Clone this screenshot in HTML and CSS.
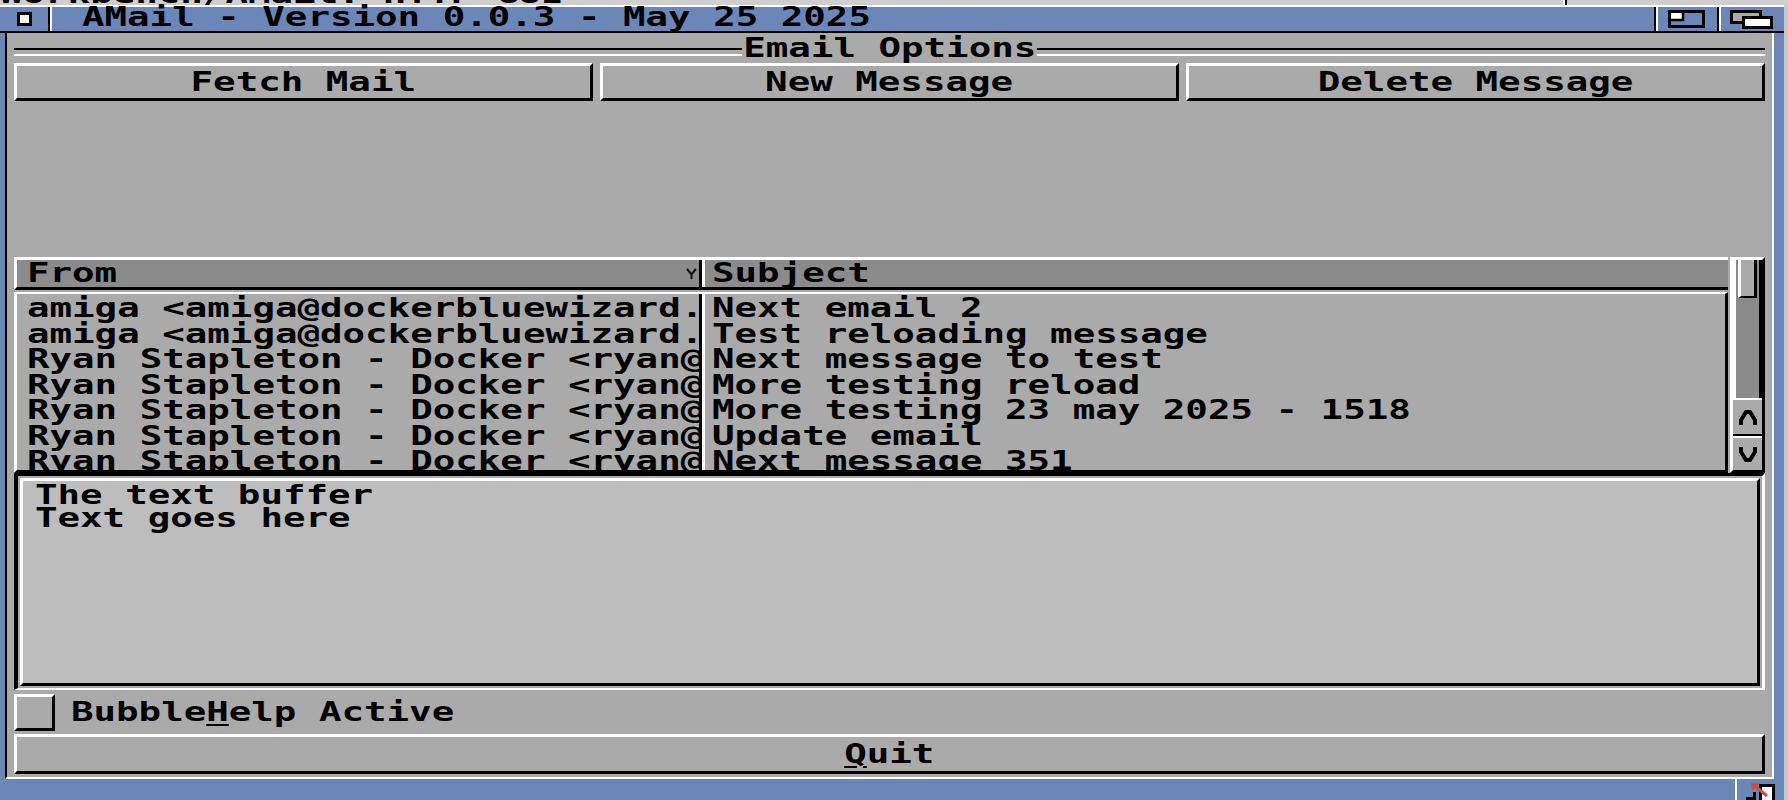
FILE: index.html
```html
<!DOCTYPE html>
<html lang="en">
<head>
    <meta charset="UTF-8">
    <title>AMail - Version 0.0.3</title>
    <link rel="stylesheet" href="styles.css">
</head>
<body>
    <div class="screen-bar">
        <div class="screen-bar-text"><span class="t">Workbench/AMail: HTTP GUI</span></div>
        <div class="screen-gadget"></div>
    </div>
    <div class="window">
        <div class="titlebar">
            <div class="close-gadget"><div class="close-box"></div></div>
            <div class="title"><span class="t">AMail - Version 0.0.3 - May 25 2025</span></div>
            <div class="title-gadget">
                <svg width="37" height="18" viewBox="0 0 37 18">
                    <rect x="1.5" y="1.5" width="34" height="15" fill="none" stroke="#000" stroke-width="3"/>
                    <rect x="3" y="3" width="12" height="7" fill="#fff"/>
                    <path d="M15 3 V10 H3" fill="none" stroke="#000" stroke-width="2.5"/>
                </svg>
            </div>
            <div class="title-gadget depth">
                <svg width="43" height="19" viewBox="0 0 43 19">
                    <rect x="1.5" y="1.5" width="29" height="11" fill="#aaa" stroke="#000" stroke-width="3"/>
                    <rect x="13.5" y="7.5" width="28" height="10" fill="#fff" stroke="#000" stroke-width="3"/>
                </svg>
            </div>
        </div>

        <div class="middle">
            <div class="content">
                <div class="group-title"><span class="t">Email Options</span></div>

                <div class="button-row">
                    <div class="button"><span class="t">Fetch Mail</span></div>
                    <div class="button"><span class="t">New Message</span></div>
                    <div class="button"><span class="t">Delete Message</span></div>
                </div>

                <div class="spacer"></div>

                <div class="list-area">
                    <div class="listview">
                        <div class="list-header">
                            <div class="col-from head-from">
                                <span class="t">From</span>
                                <svg class="sort-mark" width="11" height="12" viewBox="0 0 11 12">
                                    <path d="M1 1 L5.5 6.5 L10 1 M5.5 6.5 V11" fill="none" stroke="#111" stroke-width="2"/>
                                </svg>
                            </div>
                            <div class="col-subject"><span class="t">Subject</span></div>
                        </div>
                        <div class="list-body">
                            <div class="col-from">
                                <div class="line"><span class="t">amiga &lt;amiga@dockerbluewizard.com&gt;</span></div>
                                <div class="line"><span class="t">amiga &lt;amiga@dockerbluewizard.com&gt;</span></div>
                                <div class="line"><span class="t">Ryan Stapleton - Docker &lt;ryan@dockerbluewizard.com&gt;</span></div>
                                <div class="line"><span class="t">Ryan Stapleton - Docker &lt;ryan@dockerbluewizard.com&gt;</span></div>
                                <div class="line"><span class="t">Ryan Stapleton - Docker &lt;ryan@dockerbluewizard.com&gt;</span></div>
                                <div class="line"><span class="t">Ryan Stapleton - Docker &lt;ryan@dockerbluewizard.com&gt;</span></div>
                                <div class="line"><span class="t">Ryan Stapleton - Docker &lt;ryan@dockerbluewizard.com&gt;</span></div>
                            </div>
                            <div class="col-subject">
                                <div class="line"><span class="t">Next email 2</span></div>
                                <div class="line"><span class="t">Test reloading message</span></div>
                                <div class="line"><span class="t">Next message to test</span></div>
                                <div class="line"><span class="t">More testing reload</span></div>
                                <div class="line"><span class="t">More testing 23 may 2025 - 1518</span></div>
                                <div class="line"><span class="t">Update email</span></div>
                                <div class="line"><span class="t">Next message 351</span></div>
                            </div>
                        </div>
                    </div>
                    <div class="scrollbar">
                        <div class="track"><div class="knob"></div></div>
                        <div class="arrow arrow-up">
                            <svg width="20" height="17" viewBox="0 0 20 17">
                                <path d="M3 16 V11 L8 3 H12 L17 11 V16" fill="none" stroke="#000" stroke-width="4"/>
                            </svg>
                        </div>
                        <div class="arrow">
                            <svg width="20" height="17" viewBox="0 0 20 17">
                                <path d="M3 1 V6 L8 14 H12 L17 6 V1" fill="none" stroke="#000" stroke-width="4"/>
                            </svg>
                        </div>
                    </div>
                </div>

                <div class="editor">
                    <div class="editor-inner">
                        <div class="line"><span class="t">The text buffer</span></div>
                        <div class="line"><span class="t">Text goes here</span></div>
                    </div>
                </div>

                <div class="check-row">
                    <div class="checkbox"></div>
                    <span class="t">Bubble<u>H</u>elp Active</span>
                </div>

                <div class="button quit"><span class="t"><u>Q</u>uit</span></div>
            </div>
        </div>

        <div class="bottom-bar">
            <div class="size-gadget">
                <svg width="30" height="18" viewBox="0 0 30 18">
                    <rect x="14.5" y="3.5" width="13" height="16" fill="#fff" stroke="#000" stroke-width="3"/>
                    <path d="M0 16.5 H8.5 V10" fill="none" stroke="#000" stroke-width="3"/>
                    <path d="M21 14 L9 4" stroke="#d84a3a" stroke-width="3"/>
                    <path d="M5 1 H14 L6 9 Z" fill="#d84a3a"/>
                </svg>
            </div>
        </div>
    </div>
</body>
</html>
```

FILE: styles.css
```css
* {
    box-sizing: border-box;
}
body {
    margin: 0;
    width: 1788px;
    height: 800px;
    overflow: hidden;
    background-color: #c8c8c8;
    color: #000;
    font-family: "DejaVu Sans Mono", "Liberation Mono", monospace;
    font-weight: bold;
    font-size: 26px;
}
/* topaz-like wide glyphs: 15.65px advance stretched to 22.5px */
.t {
    display: inline-block;
    white-space: pre;
    transform: scaleX(1.44);
    transform-origin: 0 50%;
}
u {
    text-decoration-thickness: 2px;
    text-underline-offset: 3px;
}

.screen-bar {
    display: flex;
    height: 5px;
    overflow: hidden;
    background-color: #cfcfcf;
}
.screen-bar-text {
    width: 1563px;
    margin-top: -19px;
    line-height: 26px;
    white-space: nowrap;
    overflow: hidden;
}
.screen-gadget {
    width: 4px;
    border-left: 2px solid #fff;
    border-right: 2px solid #000;
}

.window {
    width: 1784px;
    height: 795px;
    display: flex;
    flex-direction: column;
    background-color: #6b87b8;
}

.titlebar {
    display: flex;
    height: 28px;
    border-top: 2px solid #fff;
    border-bottom: 2px solid #000;
}
.close-gadget {
    width: 50px;
    display: flex;
    align-items: center;
    justify-content: center;
    border-right: 2px solid #000;
    box-shadow: 2px 0 0 #fff;
}
.close-box {
    width: 15px;
    height: 14px;
    border: 3px solid #000;
    background-color: #fff;
}
.title {
    flex: 1;
    padding-left: 32px;
    line-height: 20px;
    white-space: nowrap;
}
.title-gadget {
    width: 63px;
    display: flex;
    align-items: center;
    justify-content: center;
    border-left: 2px solid #000;
    box-shadow: inset 2px 0 0 #fff;
}
.title-gadget.depth {
    width: 67px;
}

.middle {
    flex: 1;
    display: flex;
    padding: 0 10px 0 5px;
}
.content {
    flex: 1;
    display: flex;
    flex-direction: column;
    padding: 3px 7px;
    background-color: #aaa;
    border-left: 2px solid #000;
    border-right: 2px solid #fff;
    border-bottom: 2px solid #fff;
}

.group-title {
    display: flex;
    height: 24px;
    line-height: 24px;
}
.group-title::before,
.group-title::after {
    content: "";
    flex: 1;
    margin-top: 12px;
    height: 4px;
    border-top: 2px solid #000;
    border-bottom: 2px solid #fff;
}
.group-title .t {
    margin: 0 46px;
    transform-origin: 50% 50%;
}

.button-row {
    display: flex;
    gap: 7px;
    margin-top: 3px;
}
.button {
    flex: 1;
    height: 38px;
    line-height: 32px;
    text-align: center;
    border: 3px solid;
    border-color: #fff #000 #000 #fff;
}
.button .t {
    transform-origin: 50% 50%;
}

.spacer {
    flex: 1;
}

.list-area {
    display: flex;
    gap: 2px;
    height: 216px;
}
.listview {
    flex: 1;
    display: flex;
    flex-direction: column;
}
.list-header {
    display: flex;
    height: 33px;
    line-height: 27px;
    margin-bottom: 2px;
    background-color: #8b8b8b;
    border-top: 3px solid #fff;
    border-left: 3px solid #fff;
    border-bottom: 3px solid #000;
}
.list-body {
    flex: 1;
    display: flex;
    overflow: hidden;
    border-top: 2px solid #fff;
    border-left: 3px solid #fff;
    border-right: 3px solid #000;
    border-bottom: 3px solid #000;
}
.col-from {
    width: 685px;
    padding-left: 10px;
    overflow: hidden;
    border-right: 3px solid #000;
}
.col-subject {
    flex: 1;
    padding-left: 7px;
    overflow: hidden;
    border-left: 3px solid #fff;
}
.head-from {
    display: flex;
    align-items: center;
}
.sort-mark {
    margin-left: auto;
    margin-right: 2px;
}
.list-body .col-from,
.list-body .col-subject {
    padding-top: 2px;
}
.list-body .line {
    height: 25.5px;
    line-height: 25.5px;
    white-space: nowrap;
}

.scrollbar {
    width: 35px;
    display: flex;
    flex-direction: column;
    border: 3px solid;
    border-color: #fff #000 #000 #fff;
}
.track {
    height: 138px;
    background-color: #8b8b8b;
    border-left: 3px solid #fff;
    border-right: 3px solid #000;
}
.knob {
    height: 38px;
    margin: 0 2px;
    background-color: #aaa;
    border-left: 3px solid #fff;
    border-right: 3px solid #000;
    border-bottom: 2px solid #000;
}
.arrow {
    flex: 1;
    display: flex;
    align-items: center;
    justify-content: center;
    border-top: 2px solid #fff;
}
.arrow-up {
    flex: none;
    height: 38px;
    border-bottom: 2px solid #000;
}

.editor {
    height: 217px;
    padding: 2px;
    border-style: solid;
    border-width: 3px 3px 2px 4px;
    border-color: #000 #fff #fff #000;
}
.editor-inner {
    height: 100%;
    padding: 3px 0 0 12px;
    line-height: 22.7px;
    background-color: #bdbdbd;
    border: 3px solid;
    border-color: #fff #000 #000 #fff;
}

.check-row {
    display: flex;
    align-items: center;
    gap: 16px;
    height: 37px;
    margin-top: 4px;
    line-height: 37px;
}
.checkbox {
    width: 41px;
    height: 37px;
    border: 3px solid;
    border-color: #fff #000 #000 #fff;
}

.button.quit {
    flex: none;
    height: 40px;
    margin-top: 3px;
    line-height: 34px;
}

.bottom-bar {
    height: 21px;
    display: flex;
    justify-content: flex-end;
}
.size-gadget {
    width: 49px;
    display: flex;
    align-items: flex-end;
    justify-content: center;
    border-left: 2px solid #fff;
}
```
